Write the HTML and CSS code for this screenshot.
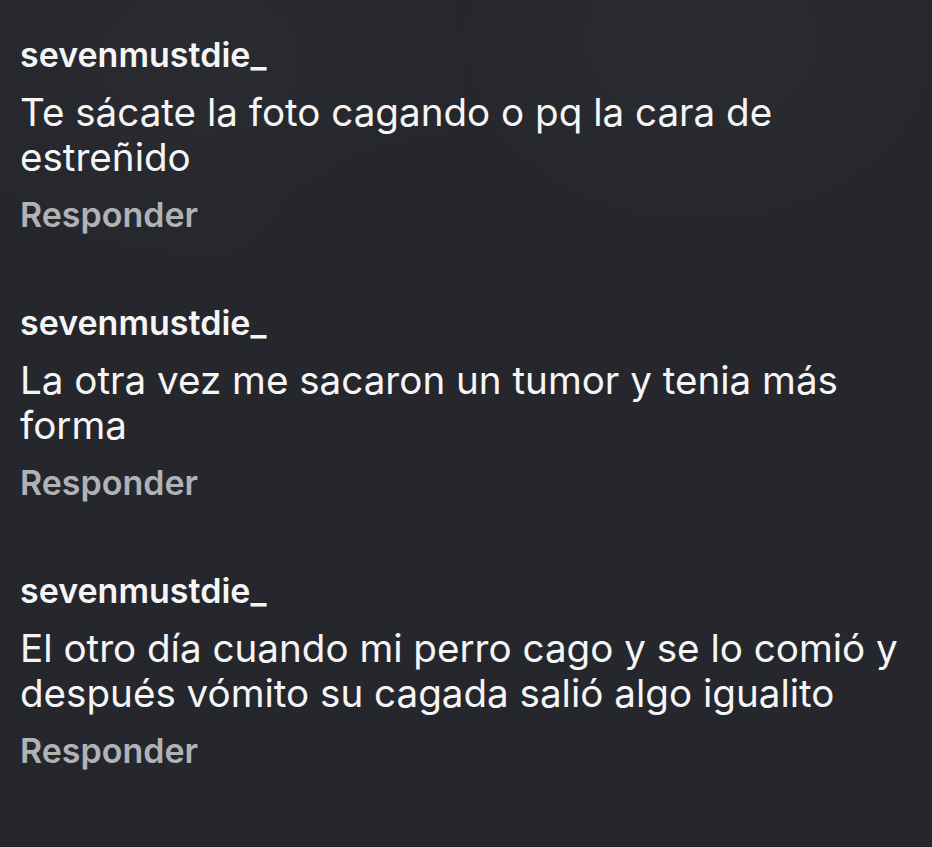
FILE: index.html
```html
<!DOCTYPE html>
<html lang="es">
<head>
  <meta charset="UTF-8" />
  <meta name="viewport" content="width=device-width, initial-scale=1.0"/>
  <title>Comentarios</title>
  <link rel="stylesheet" href="styles.css">
</head>
<body>
  <div class="comments">
    <div class="comment">
      <div class="user">sevenmustdie_</div>
      <p class="text">Te sácate la foto cagando o pq la cara de estreñido</p>
      <div class="reply">Responder</div>
    </div>
    <div class="comment">
      <div class="user">sevenmustdie_</div>
      <p class="text">La otra vez me sacaron un tumor y tenia más forma</p>
      <div class="reply">Responder</div>
    </div>
    <div class="comment">
      <div class="user">sevenmustdie_</div>
      <p class="text">El otro día cuando mi perro cago y se lo comió y después vómito su cagada salió algo igualito</p>
      <div class="reply">Responder</div>
    </div>
  </div>
</body>
</html>
```

FILE: styles.css
```css
html, body {
  height: 100%;
}
body {
  margin: 0;
  font-family: Inter, 'Noto Sans', sans-serif;
  color: #f5f5f6;
  background-color: #25272c;
  background-image:
    radial-gradient(ellipse 260px 200px at 700px 40px, rgba(255,255,255,0.025), transparent),
    radial-gradient(ellipse 300px 220px at 200px 60px, rgba(255,255,255,0.02), transparent),
    radial-gradient(ellipse 220px 160px at 420px 260px, rgba(0,0,0,0.06), transparent);
}
.comments {
  display: flex;
  flex-direction: column;
  gap: 68px;
  padding: 35px 12px 0 20px;
}
.comment {
  display: flex;
  flex-direction: column;
}
.user {
  font-size: 34px;
  font-weight: 600;
  line-height: 40px;
}
.text {
  margin: 15px 0 0 0;
  font-size: 38.6px;
  line-height: 45px;
}
.reply {
  margin-top: 15px;
  font-size: 34px;
  font-weight: 600;
  line-height: 40px;
  color: #b0b2b6;
}
```
